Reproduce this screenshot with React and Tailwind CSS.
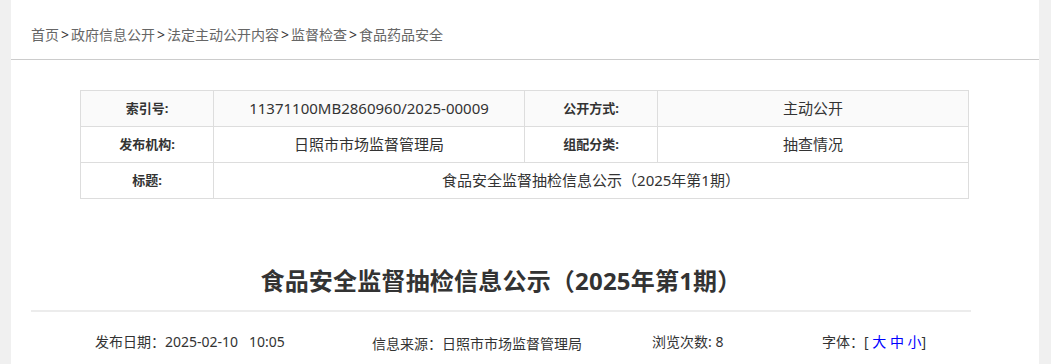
import React from "react";

const FONT = { fontFamily: '"Noto Sans", "Noto Sans CJK SC", sans-serif' };

function Row({ cells, shaded, full }) {
  const bg = shaded ? "bg-[#fafafa]" : "bg-white";
  if (full) {
    return (
      <tr className={`h-[36px] ${bg}`}>
        <td className="border border-[#dddddd] text-center text-[13px] font-bold text-[#333]">{cells[0]}</td>
        <td colSpan={3} className="border border-[#dddddd] text-center text-[15px] text-[#333]">{cells[1]}</td>
      </tr>
    );
  }
  return (
    <tr className={`h-[36px] ${bg}`}>
      <td className="border border-[#dddddd] text-center text-[13px] font-bold text-[#333]">{cells[0]}</td>
      <td className="border border-[#dddddd] text-center text-[15px] text-[#333]">{cells[1]}</td>
      <td className="border border-[#dddddd] text-center text-[13px] font-bold text-[#333]">{cells[2]}</td>
      <td className="border border-[#dddddd] text-center text-[15px] text-[#333]">{cells[3]}</td>
    </tr>
  );
}

export default function App() {
  const crumbs = ["首页", "政府信息公开", "法定主动公开内容", "监督检查", "食品药品安全"];
  return (
    <div className="w-full min-h-[364px] bg-[#f0f0f0]" style={FONT}>
      <div className="ml-[11px] w-[1028px] min-h-[364px] bg-white">
        <div className="h-[60px] border-b border-[#cccccc] pl-[20px] pt-[26px] text-[14px] leading-[18px] text-[#666]">
          {crumbs.map((c, i) => (
            <React.Fragment key={c}>
              {i > 0 && <span className="mx-[2px] text-[#333]">&gt;</span>}
              <span>{c}</span>
            </React.Fragment>
          ))}
        </div>

        <div className="pl-[69px] pt-[30px]">
          <table className="w-[888px] table-fixed border-collapse">
            <colgroup>
              <col className="w-[133px]" />
              <col className="w-[311px]" />
              <col className="w-[133px]" />
              <col className="w-[311px]" />
            </colgroup>
            <tbody>
              <Row shaded cells={["索引号:", "11371100MB2860960/2025-00009", "公开方式:", "主动公开"]} />
              <Row cells={["发布机构:", "日照市市场监督管理局", "组配分类:", "抽查情况"]} />
              <Row full cells={["标题:", "食品安全监督抽检信息公示（2025年第1期）"]} />
            </tbody>
          </table>
        </div>

        <div className="ml-[20px] w-[940px]">
          <div className="mt-[62px] border-b-2 border-[#ececec] pb-[9px] text-center text-[24px] font-bold leading-[40px] tracking-[0.2px] text-[#333]">
            食品安全监督抽检信息公示（2025年第1期）
          </div>
          <div className="flex items-start pt-[20px] text-[14px] leading-[20px] text-[#333]">
            <div className="ml-[64px] w-[277px]">发布日期：2025-02-10&nbsp;&nbsp;&nbsp;10:05</div>
            <div className="mt-[2px] w-[280px]">信息来源：日照市市场监督管理局</div>
            <div className="w-[170px]">浏览次数: 8</div>
            <div>
              字体：[ <span className="cursor-pointer text-[#0000ff]">大</span>{" "}
              <span className="cursor-pointer text-[#0000ff]">中</span>{" "}
              <span className="cursor-pointer text-[#0000ff]">小</span>]
            </div>
          </div>
        </div>
      </div>
    </div>
  );
}
